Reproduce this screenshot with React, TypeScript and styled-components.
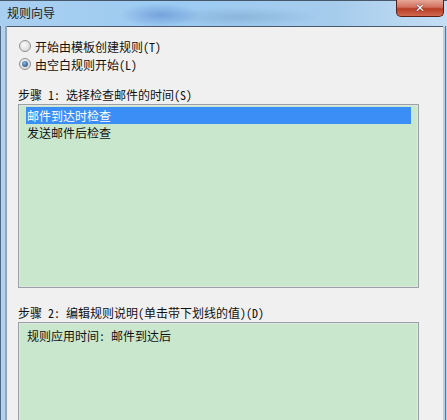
import React from "react";
import styled, { createGlobalStyle } from "styled-components";

const Global = createGlobalStyle`
  html, body { margin: 0; padding: 0; background: #f0f0f0; }
  body { font-family: "Noto Sans Mono CJK SC", "Noto Sans CJK SC", "Noto Sans", monospace; }
`;

const Window = styled.div`
  width: 447px;
  height: 420px;
  overflow: hidden;
  display: flex;
  flex-direction: column;
  background: #bcd6ee;
`;

const TitleBar = styled.div`
  height: 26px;
  flex: none;
  display: flex;
  align-items: flex-start;
  justify-content: space-between;
  border-top: 1px solid #46586a;
  box-sizing: border-box;
  background:
    radial-gradient(ellipse 40px 12px at 160px 14px, rgba(90,135,205,0.6), transparent),
    radial-gradient(ellipse 80px 10px at 240px 16px, rgba(120,160,200,0.5), transparent),
    linear-gradient(to right, #a9cff0 0%, #9ccbf2 40%, #a6ccec 75%, #c4def4 100%);
`;

const Title = styled.div`
  font-size: 12px;
  line-height: 14px;
  color: #1a1a1a;
  padding: 5px 0 0 7px;
`;

const CloseButton = styled.div`
  width: 48px;
  height: 17px;
  margin: -1px 3px 0 0;
  box-sizing: border-box;
  border: 1px solid #5a2018;
  border-top: none;
  border-radius: 0 0 5px 5px;
  background: linear-gradient(to bottom, #e8a898 0%, #d0705e 45%, #b83c24 55%, #d06a50 100%);
  display: flex;
  align-items: center;
  justify-content: center;
  color: #fff;
  font-family: "DejaVu Sans", sans-serif;
  font-weight: bold;
  font-size: 12px;
  text-shadow: 0 0 1px #4a1008, 0 0 1px #4a1008;
`;

const Frame = styled.div`
  flex: 1;
  display: flex;
  min-height: 0;
`;

const SideFrame = styled.div<{ $w: number; $edge: "left" | "right" }>`
  width: ${(p) => p.$w}px;
  flex: none;
  background: ${(p) =>
    p.$edge === "left"
      ? "linear-gradient(to right, #4e6a86 0 1px, #b4d0ea 1px 5px, #8fa6bc 5px)"
      : "linear-gradient(to right, #b4d0ea 0 2px, #5a7894 2px 3px, #b4d0ea 3px)"};
`;

const Content = styled.div`
  flex: 1;
  min-height: 0;
  overflow: hidden;
  background: #f0f0f0;
  border-top: 1px solid #4a5a6c;
  display: flex;
  flex-direction: column;
  padding: 10px 0 0 11px;
`;

const RadioRow = styled.label`
  flex: none;
  display: flex;
  align-items: center;
  height: 18px;
  font-size: 12px;
  color: #111;
  padding-left: 1px;
`;

const RadioCircle = styled.span<{ $checked?: boolean }>`
  width: 12px;
  height: 12px;
  border-radius: 50%;
  box-sizing: border-box;
  border: 1px solid #8f8f8f;
  background: radial-gradient(circle at 40% 40%, #fafafa, #d0d0d0);
  margin-right: 4px;
  display: flex;
  align-items: center;
  justify-content: center;
  &::after {
    content: "";
    display: ${(p) => (p.$checked ? "block" : "none")};
    width: 6px;
    height: 6px;
    border-radius: 50%;
    background: radial-gradient(circle at 40% 35%, #8ab4de, #1a3e6a);
  }
`;

const StepLabel = styled.div<{ $top: number }>`
  flex: none;
  font-size: 12px;
  height: 18px;
  line-height: 18px;
  color: #111;
  margin-top: ${(p) => p.$top}px;
`;

const ListBox = styled.div<{ $height: number }>`
  flex: none;
  width: 401px;
  height: ${(p) => p.$height}px;
  box-sizing: border-box;
  border: 1px solid #9aa0a6;
  box-shadow: inset 0 0 0 1px #dfe8e0;
  background: #c9e7cd;
  padding: 2px 7px 0 7px;
  display: flex;
  flex-direction: column;
`;

const ListItem = styled.div<{ $selected?: boolean }>`
  height: 17px;
  line-height: 17px;
  font-size: 12px;
  padding-left: 1px;
  color: ${(p) => (p.$selected ? "#fff" : "#111")};
  background: ${(p) => (p.$selected ? "#3a8ef6" : "transparent")};
`;

const Description = styled.div`
  font-size: 12px;
  line-height: 17px;
  color: #111;
  padding: 2px 0 0 1px;
`;

export default function App() {
  return (
    <>
      <Global />
      <Window>
        <TitleBar>
          <Title>规则向导</Title>
          <CloseButton>✕</CloseButton>
        </TitleBar>
        <Frame>
          <SideFrame $w={7} $edge="left" />
          <Content>
            <RadioRow>
              <RadioCircle />
              开始由模板创建规则(T)
            </RadioRow>
            <RadioRow>
              <RadioCircle $checked />
              由空白规则开始(L)
            </RadioRow>
            <StepLabel $top={13}>步骤 1: 选择检查邮件的时间(S)</StepLabel>
            <ListBox $height={184}>
              <ListItem $selected>邮件到达时检查</ListItem>
              <ListItem>发送邮件后检查</ListItem>
            </ListBox>
            <StepLabel $top={16}>步骤 2: 编辑规则说明(单击带下划线的值)(D)</StepLabel>
            <ListBox $height={140}>
              <Description>规则应用时间: 邮件到达后</Description>
            </ListBox>
          </Content>
          <SideFrame $w={4} $edge="right" />
        </Frame>
      </Window>
    </>
  );
}
